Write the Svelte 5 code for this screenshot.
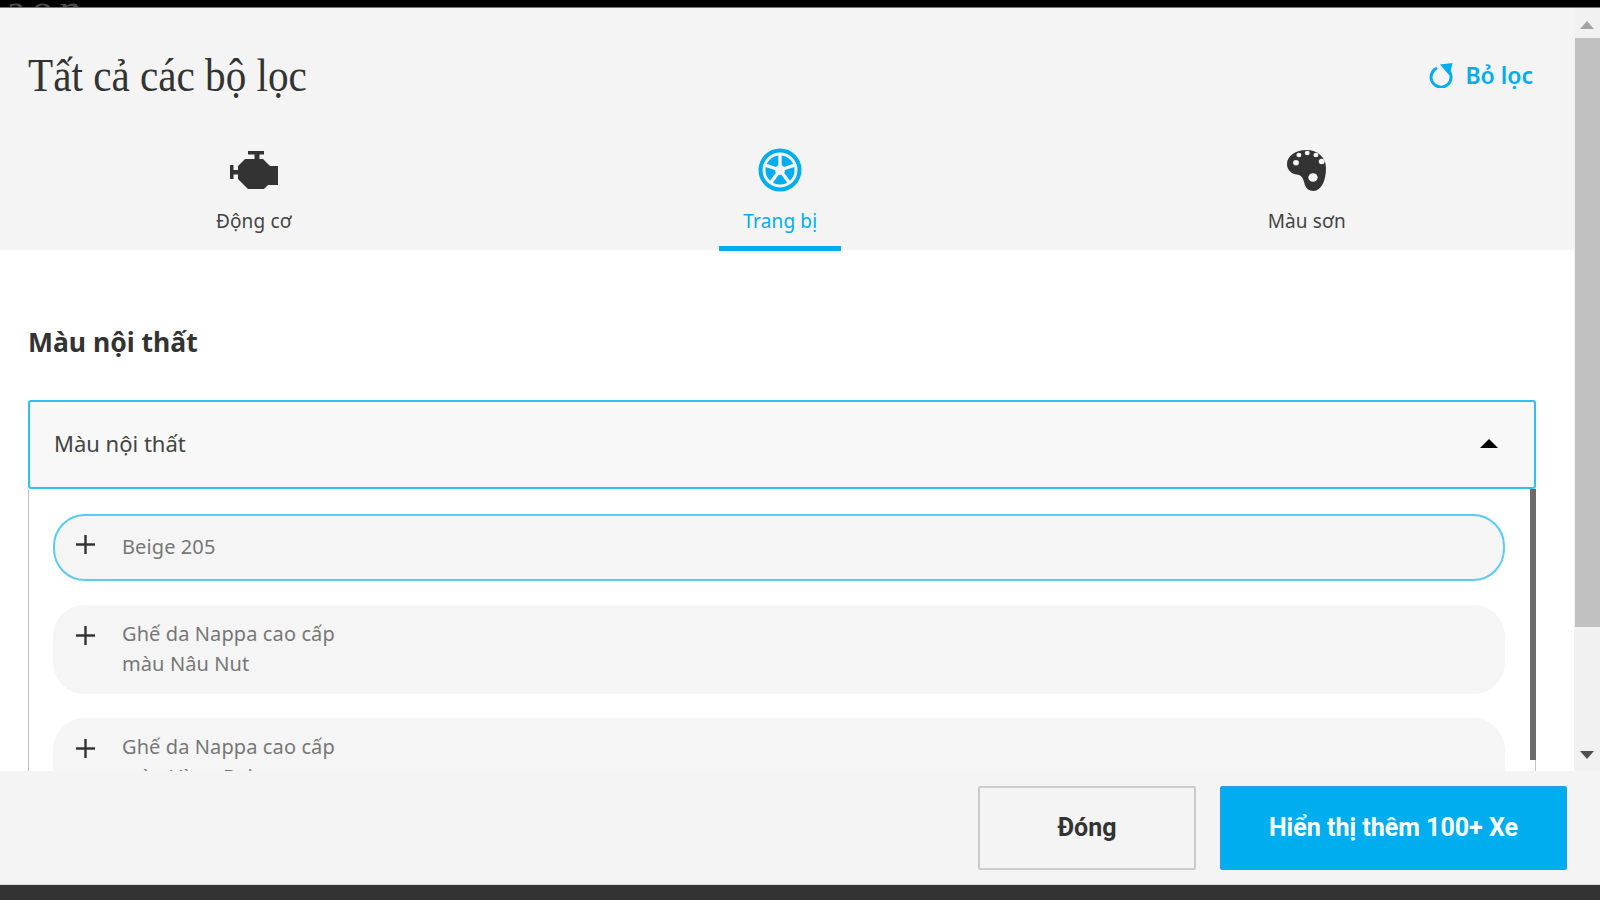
<script>
  const options = [
    { id: 1, lines: ['Beige 205'], active: true },
    { id: 2, lines: ['Ghế da Nappa cao cấp', 'màu Nâu Nut'] },
    { id: 3, lines: ['Ghế da Nappa cao cấp', 'màu Vàng Beige'] }
  ];
</script>

<div class="page">
  <div class="topbar"><span class="behind">aon</span></div>

  <div class="viewport">
    <div class="panel">
      <header class="head">
        <h1>Tất cả các bộ lọc</h1>
        <button class="reset">
          <svg width="24" height="25" viewBox="0 0 24 25" fill="none">
            <path d="M8 5A10 10 0 1 0 18.500 6.500" stroke="#00adef" stroke-width="3" />
            <path d="M11 1.500L23.500 0L20.500 12.500Z" fill="#00adef" />
          </svg>
          <span>Bỏ lọc</span>
        </button>
      </header>

      <nav class="tabs">
        <div class="tab">
          <div class="icon">
            <svg width="48" height="38" viewBox="0 0 48 38">
              <path fill="#333" d="M18 0H34V3.500H29.500V8H33L40 15H48V34H38L34 38H18L8 28V23.500H3.500V28H0V14H3.500V19H8V15L15 8H24.500V3.500H18Z" />
            </svg>
          </div>
          <span>Động cơ</span>
        </div>
        <div class="tab current">
          <div class="icon">
            <svg width="44" height="44" viewBox="0 0 44 44">
              <circle cx="22" cy="22" r="19.500" fill="none" stroke="#00adef" stroke-width="4" />
              <circle cx="22" cy="22" r="14.500" fill="#00adef" />
              <g stroke="#f4f4f4" stroke-width="3.400">
                <path d="M22 22V5" />
                <path d="M22 22L38.200 16.700" />
                <path d="M22 22L32 35.800" />
                <path d="M22 22L12 35.800" />
                <path d="M22 22L5.800 16.700" />
              </g>
              <circle cx="22" cy="22" r="5" fill="#f4f4f4" />
            </svg>
          </div>
          <span>Trang bị</span>
        </div>
        <div class="tab">
          <div class="icon">
            <svg width="39" height="41" viewBox="0 0 36 41" preserveAspectRatio="none">
              <path fill="#333" d="M18 0C28 0 36 7 36 18C36 24 35 30 33 34C31 38 28 41 24.500 41C20 41 17 38 16 33C15 28 13 25 9 24.500C4 24 0 20 0 14C0 6 8 0 18 0Z" />
              <g fill="#f4f4f4">
                <circle cx="8.300" cy="12.700" r="2.700" />
                <circle cx="11" cy="5" r="2.300" />
                <circle cx="18.700" cy="3" r="2.300" />
                <circle cx="26.700" cy="5" r="2.300" />
                <circle cx="32" cy="11.500" r="2.700" />
                <circle cx="24" cy="27.500" r="4.300" />
              </g>
            </svg>
          </div>
          <span>Màu sơn</span>
        </div>
      </nav>

      <section class="body">
        <h2>Màu nội thất</h2>

        <div class="select">
          <span>Màu nội thất</span>
          <i class="caret"></i>
        </div>

        <div class="dropdown">
          {#each options as opt (opt.id)}
            <div class="option" class:active={opt.active}>
              <svg class="plus" width="19" height="19" viewBox="0 0 19 19">
                <path d="M9.500 0V19M0 9.500H19" stroke="#333" stroke-width="2.400" />
              </svg>
              <div class="label">
                {#each opt.lines as line}
                  <div>{line}</div>
                {/each}
              </div>
            </div>
          {/each}
        </div>
      </section>
    </div>

    <div class="scrollbar">
      <i class="arrow up"></i>
      <div class="thumb"></div>
      <i class="arrow down"></i>
    </div>
  </div>

  <footer class="foot">
    <button class="close">Đóng</button>
    <button class="more">Hiển thị thêm 100+ Xe</button>
  </footer>

  <div class="bottombar"></div>
</div>

<style>
  :global(body) {
    margin: 0;
    overflow: hidden;
  }

  .page {
    height: 900px;
    display: flex;
    flex-direction: column;
    font-family: 'Noto Sans', sans-serif;
    color: #333;
    background: #fff;
  }

  .topbar {
    height: 7px;
    flex: none;
    overflow: hidden;
    background: #000;
    border-bottom: 1px solid #777;
    padding-left: 6px;
  }

  .behind {
    display: block;
    margin-top: -12px;
    font-family: 'Liberation Serif', serif;
    font-size: 44px;
    line-height: 44px;
    letter-spacing: 6px;
    color: #4a4a4a;
  }

  .viewport {
    height: 763px;
    flex: none;
    display: flex;
  }

  .panel {
    flex: 1;
    min-width: 0;
    overflow: hidden;
  }

  .head {
    height: 132px;
    background: #f4f4f4;
    display: flex;
    justify-content: space-between;
    align-items: center;
    padding: 2px 41px 0 28px;
    box-sizing: border-box;
  }

  h1 {
    margin: 0;
    font-family: 'Liberation Serif', serif;
    font-weight: 400;
    font-size: 46px;
    transform: scaleX(0.895);
    transform-origin: left center;
    color: #333;
  }

  .reset {
    display: flex;
    align-items: center;
    gap: 12px;
    padding: 0;
    border: none;
    background: none;
    color: #00adef;
    font-family: inherit;
    font-size: 23px;
    font-weight: 600;
  }

  .tabs {
    display: grid;
    grid-template-columns: repeat(3, 526.500px);
    margin-left: -9.500px;
    height: 110px;
    background: #f4f4f4;
  }

  .tab {
    position: relative;
    height: 110px;
    display: flex;
    flex-direction: column;
    align-items: center;
    gap: 16px;
    padding-top: 8px;
    box-sizing: border-box;
    font-size: 19px;
    letter-spacing: 0.15px;
    color: #444;
  }

  .icon {
    height: 44px;
    display: flex;
    align-items: center;
  }

  .tab span {
    line-height: 26px;
  }

  .current {
    color: #00adef;
  }

  .current::after {
    content: '';
    position: absolute;
    left: 50%;
    bottom: -1px;
    width: 122px;
    height: 5px;
    margin-left: -61px;
    background: #00adef;
  }

  .body {
    padding: 69px 38px 0 28px;
  }

  h2 {
    margin: 0 0 35px;
    font-size: 26.500px;
    line-height: 46px;
    font-weight: 700;
    color: #333;
  }

  .select {
    height: 89px;
    box-sizing: border-box;
    border: 2px solid #2cc0f5;
    border-radius: 3px;
    background: #f8f8f8;
    display: flex;
    align-items: center;
    justify-content: space-between;
    padding: 0 36px 3px 24px;
    font-size: 22px;
    color: #444;
  }

  .caret {
    width: 0;
    height: 0;
    border-left: 9px solid transparent;
    border-right: 9px solid transparent;
    border-bottom: 9px solid #000;
  }

  .dropdown {
    position: relative;
    border-left: 1px solid #c4c4c4;
    border-right: 1px solid #c4c4c4;
    padding: 25px 30px 0 24px;
    display: flex;
    flex-direction: column;
    gap: 24px;
  }

  .dropdown::after {
    content: '';
    position: absolute;
    top: 0;
    right: -1px;
    width: 6px;
    height: 271px;
    background: #6b6b6b;
  }

  .option {
    display: flex;
    gap: 27px;
    padding: 12px 21px 13px;
    border: 2px solid #f5f5f5;
    border-radius: 32px;
    background: #f5f5f5;
    font-size: 20px;
    line-height: 30px;
    letter-spacing: 0.1px;
    color: #777;
  }

  .option.active {
    border-color: #5ccbf3;
    padding: 16px 21px 17px;
  }

  .plus {
    flex: none;
    margin-top: 7px;
  }

  .active .plus {
    margin-top: 3px;
  }

  .scrollbar {
    width: 26px;
    flex: none;
    background: #f1f1f1;
    display: flex;
    flex-direction: column;
    align-items: center;
  }

  .thumb {
    width: 25px;
    align-self: flex-end;
    height: 589px;
    background: #c1c1c1;
    margin: 9px 0 auto;
  }

  .arrow {
    width: 0;
    height: 0;
    border-left: 7px solid transparent;
    border-right: 7px solid transparent;
  }

  .arrow.up {
    margin-top: 13px;
    border-bottom: 8px solid #a3a3a3;
  }

  .arrow.down {
    margin-bottom: 12px;
    border-top: 8px solid #505050;
  }

  .foot {
    height: 114px;
    flex: none;
    box-sizing: border-box;
    background: #f4f4f4;
    border-bottom: 1px solid #ddd;
    display: flex;
    justify-content: flex-end;
    align-items: center;
    gap: 24px;
    padding: 0 33px 0 0;
  }

  .foot button {
    height: 84px;
    box-sizing: border-box;
    border-radius: 2px;
    font-family: Roboto, sans-serif;
    font-size: 25px;
    font-weight: 700;
  }

  .close {
    width: 218px;
    background: #f4f4f4;
    border: 2px solid #ccc;
    color: #333;
  }

  .more {
    width: 347px;
    background: #00adef;
    border: 1px solid #2b9be8;
    color: #fff;
  }

  .bottombar {
    flex: 1;
    background: #333;
  }
</style>
